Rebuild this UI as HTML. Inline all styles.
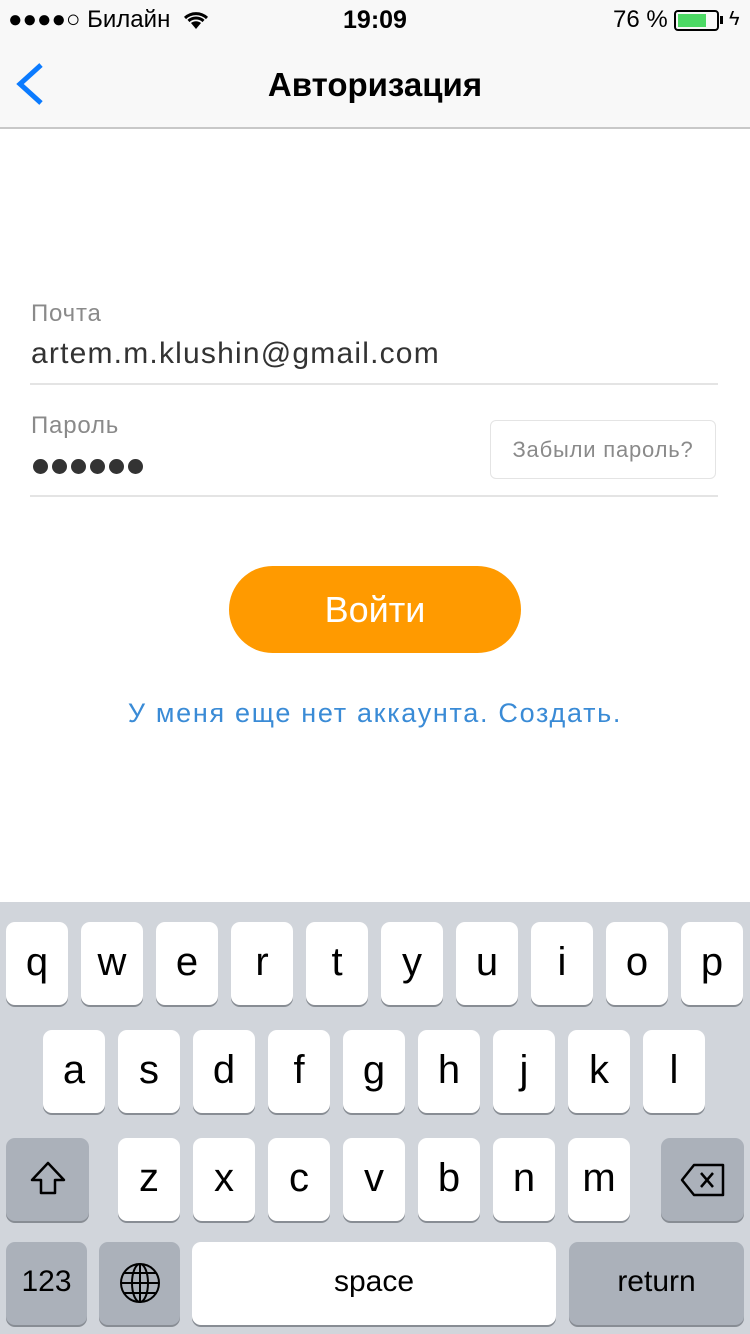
<!DOCTYPE html>
<html><head><meta charset="utf-8"><style>
*{margin:0;padding:0;box-sizing:border-box}
body{width:750px;height:1334px;position:relative;background:#fff;font-family:"Liberation Sans",sans-serif;overflow:hidden}
.abs{position:absolute}
.nav{left:0;top:0;width:750px;height:129px;background:#f8f8f8;border-bottom:2px solid #c8c8c8}
.kb{left:0;top:902px;width:750px;height:432px;background:#d1d5db}
.k{position:absolute;width:62px;height:83px;background:#fff;border-radius:9px;box-shadow:0 2px 0 #888d94;font-size:40px;text-align:center;line-height:80px;color:#000}
.g{background:#abb1ba}
.dot{position:absolute;top:459px;width:15px;height:15px;border-radius:50%;background:#333}
</style></head><body>
<div class="abs nav"></div>
<div class="abs" style="left:8px;top:6px;font-size:24px;color:#000">●●●●○ Билайн</div>
<svg class="abs" style="left:182px;top:10px" width="28" height="20" viewBox="0 0 28 20"><path d="M14 19 L9 13 A8 8 0 0 1 19 13Z" fill="#000"/><path d="M3 8 A16 16 0 0 1 25 8" stroke="#000" stroke-width="3" fill="none"/><path d="M6.5 11 A11 11 0 0 1 21.5 11" stroke="#000" stroke-width="3" fill="none"/></svg>
<div class="abs" style="left:0;width:750px;top:6px;text-align:center;font-size:25px;font-weight:bold">19:09</div>
<div class="abs" style="left:613px;top:6px;font-size:24px">76 %</div>
<div class="abs" style="left:674px;top:10px;width:45px;height:21px;border:2px solid #000;border-radius:4px;padding:2px"><div style="width:28px;height:13px;background:#4cd964"></div></div>
<div class="abs" style="left:720px;top:16px;width:3px;height:8px;background:#000"></div>
<div class="abs" style="left:729px;top:8px;font-size:20px">ϟ</div>
<svg class="abs" style="left:14px;top:62px" width="30" height="44"><path d="M27 3 L6 22 L27 41" stroke="#0b7bff" stroke-width="5" fill="none"/></svg>
<div class="abs" style="left:0;width:750px;top:66px;text-align:center;font-size:33px;font-weight:bold">Авторизация</div>

<div class="abs" style="left:31px;top:300px;font-size:24px;letter-spacing:0.8px;color:#8a8a8a">Почта</div>
<div class="abs" style="left:31px;top:337px;font-size:30px;letter-spacing:1.2px;color:#333">artem.m.klushin@gmail.com</div>
<div class="abs" style="left:30px;top:383px;width:688px;height:2px;background:#e4e4e4"></div>
<div class="abs" style="left:31px;top:412px;font-size:24px;letter-spacing:0.8px;color:#8a8a8a">Пароль</div>
<div class="dot" style="left:33px"></div><div class="dot" style="left:52px"></div><div class="dot" style="left:71px"></div><div class="dot" style="left:90px"></div><div class="dot" style="left:109px"></div><div class="dot" style="left:128px"></div>
<div class="abs" style="left:490px;top:420px;width:226px;height:59px;border:1px solid #e4e4e4;border-radius:6px;font-size:22px;letter-spacing:0.8px;color:#8a8a8a;text-align:center;line-height:57px">Забыли пароль?</div>
<div class="abs" style="left:30px;top:495px;width:688px;height:2px;background:#e4e4e4"></div>
<div class="abs" style="left:229px;top:566px;width:292px;height:87px;background:#ff9a00;border-radius:44px;color:#fff;font-size:36px;text-align:center;line-height:87px">Войти</div>
<div class="abs" style="left:0;width:750px;top:698px;text-align:center;font-size:27px;letter-spacing:1.7px;color:#3a8bd6">У меня еще нет аккаунта. Создать.</div>

<div class="abs kb">
<div class="k" style="left:6px;top:20px">q</div><div class="k" style="left:81px;top:20px">w</div><div class="k" style="left:156px;top:20px">e</div><div class="k" style="left:231px;top:20px">r</div><div class="k" style="left:306px;top:20px">t</div><div class="k" style="left:381px;top:20px">y</div><div class="k" style="left:456px;top:20px">u</div><div class="k" style="left:531px;top:20px">i</div><div class="k" style="left:606px;top:20px">o</div><div class="k" style="left:681px;top:20px">p</div>
<div class="k" style="left:43px;top:128px">a</div><div class="k" style="left:118px;top:128px">s</div><div class="k" style="left:193px;top:128px">d</div><div class="k" style="left:268px;top:128px">f</div><div class="k" style="left:343px;top:128px">g</div><div class="k" style="left:418px;top:128px">h</div><div class="k" style="left:493px;top:128px">j</div><div class="k" style="left:568px;top:128px">k</div><div class="k" style="left:643px;top:128px">l</div>
<div class="k g" style="left:6px;top:236px;width:83px"><svg width="40" height="40" viewBox="0 0 40 40" style="margin-top:21px"><path d="M20 4 L36 21 L27 21 L27 34 L13 34 L13 21 L4 21Z" stroke="#000" stroke-width="2.5" fill="none" stroke-linejoin="round"/></svg></div>
<div class="k" style="left:118px;top:236px">z</div><div class="k" style="left:193px;top:236px">x</div><div class="k" style="left:268px;top:236px">c</div><div class="k" style="left:343px;top:236px">v</div><div class="k" style="left:418px;top:236px">b</div><div class="k" style="left:493px;top:236px">n</div><div class="k" style="left:568px;top:236px">m</div>
<div class="k g" style="left:661px;top:236px;width:83px"><svg width="48" height="36" viewBox="0 0 48 36" style="margin-top:24px"><path d="M15 3 L44 3 L44 33 L15 33 L3 18Z" stroke="#000" stroke-width="2.5" fill="none" stroke-linejoin="round"/><path d="M22 11 L34 25 M34 11 L22 25" stroke="#000" stroke-width="2.5"/></svg></div>
<div class="k g" style="left:6px;top:340px;width:81px;font-size:30px">123</div>
<div class="k g" style="left:99px;top:340px;width:81px"><svg width="42" height="42" viewBox="0 0 42 42" style="margin-top:20px" stroke="#000" stroke-width="2" fill="none"><circle cx="21" cy="21" r="19"/><ellipse cx="21" cy="21" rx="8" ry="19"/><path d="M21 2V40M2 21H40M5 11H37M5 31H37"/></svg></div>
<div class="k" style="left:192px;top:340px;width:364px;font-size:30px">space</div>
<div class="k g" style="left:569px;top:340px;width:175px;font-size:30px">return</div>
</div>
</body></html>
